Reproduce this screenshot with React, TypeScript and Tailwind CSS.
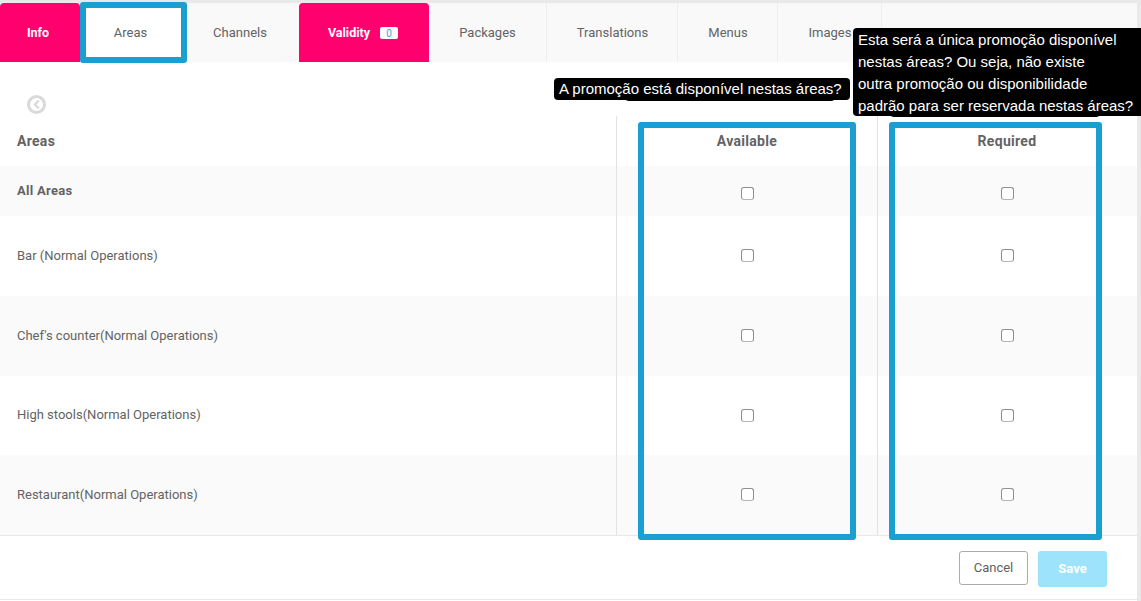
import React from "react";
import { ChevronLeft } from "lucide-react";

const font = { fontFamily: "Roboto, sans-serif" };

const tabs = [
    { label: "Info", style: "w-[80px] pr-[4px] pt-[1px] bg-[#ff006e] text-white text-[12.5px] font-bold rounded-t-[4px]" },
    { label: "Areas", style: "w-[107px] pr-[6px] bg-white text-[#636363] text-[13px]" },
    { label: "Channels", style: "w-[112px] pr-[6px] text-[#636363] text-[13px]" },
    { label: "Validity", style: "w-[130px] pr-[2px] pt-[1px] bg-[#ff006e] text-white text-[12.5px] font-bold rounded-t-[4px]", badge: "0" },
    { label: "Packages", style: "w-[118px] text-[#636363] text-[13px] border-r border-[#eeeeee]" },
    { label: "Translations", style: "w-[131px] pl-[1px] text-[#636363] text-[13px] border-r border-[#eeeeee]" },
    { label: "Menus", style: "w-[100px] pl-[1px] text-[#636363] text-[13px] border-r border-[#eeeeee]" },
    { label: "Images", style: "w-[104px] pl-[1px] text-[#636363] text-[13px] border-r border-[#eeeeee]" },
];

const rows = [
    { label: "All Areas", height: "h-[50px]", shaded: true, bold: true, checkPad: "pt-[4px]" },
    { label: "Bar (Normal Operations)", height: "h-[80px]", checkPad: "pb-[2px]" },
    { label: "Chef's counter(Normal Operations)", height: "h-[80px]", shaded: true, checkPad: "pb-[2px]" },
    { label: "High stools(Normal Operations)", height: "h-[79px]", textPad: "pb-[2px]", checkPad: "" },
    { label: "Restaurant(Normal Operations)", height: "h-[80px]", shaded: true, checkPad: "pb-[2px]" },
];

function Check() {
    return <span className="block w-[13px] h-[13px] rounded-[3px] bg-white border border-[#8f8f8f] border-b-[#b5b5b5]" />;
}

export default function App() {
    return (
        <div className="relative w-[1141px] h-[601px] overflow-hidden bg-[#e9e9e9] text-[#636363]" style={font}>
            <div className="w-[1137px] h-[600px] mt-[3px] bg-white">
                {/* Tabs */}
                <div className="flex h-[59px] bg-[#f9f9f9]">
                    {tabs.map((t) => (
                        <div key={t.label} className={`flex items-center justify-center gap-[10px] ${t.style}`}>
                            <span>{t.label}</span>
                            {t.badge && (
                                <span className="flex items-center justify-center w-[18px] h-[12px] rounded-[2px] bg-white text-[10px] font-normal text-[#43a2e0]">
                                    {t.badge}
                                </span>
                            )}
                        </div>
                    ))}
                </div>

                {/* Back button */}
                <div className="h-[54px] pl-[27px] pt-[33px]">
                    <div className="flex items-center justify-center w-[19px] h-[19px] rounded-full border-[3px] border-[#d9d9d9]">
                        <ChevronLeft size={13} strokeWidth={4.5} className="text-[#d9d9d9] -ml-px" />
                    </div>
                </div>

                {/* Table */}
                <div className="grid grid-cols-[616px_261px_1fr] h-[50px] items-center font-bold text-[14px] tracking-[0.3px]">
                    <div className="pl-[17px]">Areas</div>
                    <div className="h-[50px] border-l border-[#e2e2e2] flex items-center justify-center">Available</div>
                    <div className="h-[50px] border-l border-[#e2e2e2] flex items-center justify-center pr-[1px]">Required</div>
                </div>
                {rows.map((r) => (
                    <div
                        key={r.label}
                        className={`grid grid-cols-[616px_261px_1fr] ${r.height} ${r.shaded ? "bg-[#fafafa]" : "bg-white"}`}
                    >
                        <div className={`flex items-center pl-[17px] text-[13px] ${r.textPad ?? ""} ${r.bold ? "font-bold tracking-[0.3px]" : ""}`}>{r.label}</div>
                        <div className={`flex items-center justify-center border-l border-[#e2e2e2] ${r.checkPad}`}>
                            <Check />
                        </div>
                        <div className={`flex items-center justify-center border-l border-[#e2e2e2] pr-[1px] ${r.checkPad}`}>
                            <Check />
                        </div>
                    </div>
                ))}

                {/* Footer */}
                <div className="h-[65px] border-t border-b border-[#e8e8e8] flex items-start justify-end gap-[10px] pt-[15px] pr-[30px]">
                    <button className="w-[69px] h-[34px] rounded-[3px] border border-[#ababab] bg-white text-[13px] text-[#5f5f5f]">Cancel</button>
                    <button className="w-[69px] h-[36px] rounded-[3px] bg-[#9ce3fb] text-[13px] font-bold text-white">Save</button>
                </div>
            </div>

            {/* Annotation boxes */}
            <div className="absolute left-[80px] top-[2px] w-[107px] h-[61px] border-[6px] border-[#1a9fd3] rounded-[3px]" />
            <div className="absolute left-[638px] top-[122px] w-[218px] h-[418px] border-[6px] border-[#1a9fd3] rounded-[3px]" />
            <div className="absolute left-[889px] top-[122px] w-[213px] h-[418px] border-[6px] border-[#1a9fd3] rounded-[3px]" />

            {/* Tooltips */}
            <div className="absolute left-[625px] top-[90px] w-[210px] h-[11px] rounded-[4px] bg-black" />
            <div className="absolute left-[890px] top-[100px] w-[210px] h-[17px] rounded-[4px] bg-black" />
            <div
                className="absolute left-[554px] top-[78px] h-[22px] w-[296px] rounded-[4px] bg-black text-white text-[15px] leading-[22px] pl-[5px] whitespace-nowrap"
                style={{ fontFamily: '"Liberation Sans", Arial, sans-serif' }}
            >
                A promoção está disponível nestas áreas?
            </div>
            <div
                className="absolute left-[853px] top-[28px] h-[88px] w-[288px] rounded-l-[4px] bg-black text-white text-[15px] leading-[22px] pl-[5px] pt-[1px] whitespace-nowrap"
                style={{ fontFamily: '"Liberation Sans", Arial, sans-serif' }}
            >
                <div>Esta será a única promoção disponível</div>
                <div>nestas áreas? Ou seja, não existe</div>
                <div>outra promoção ou disponibilidade</div>
                <div>padrão para ser reservada nestas áreas?</div>
            </div>
        </div>
    );
}
